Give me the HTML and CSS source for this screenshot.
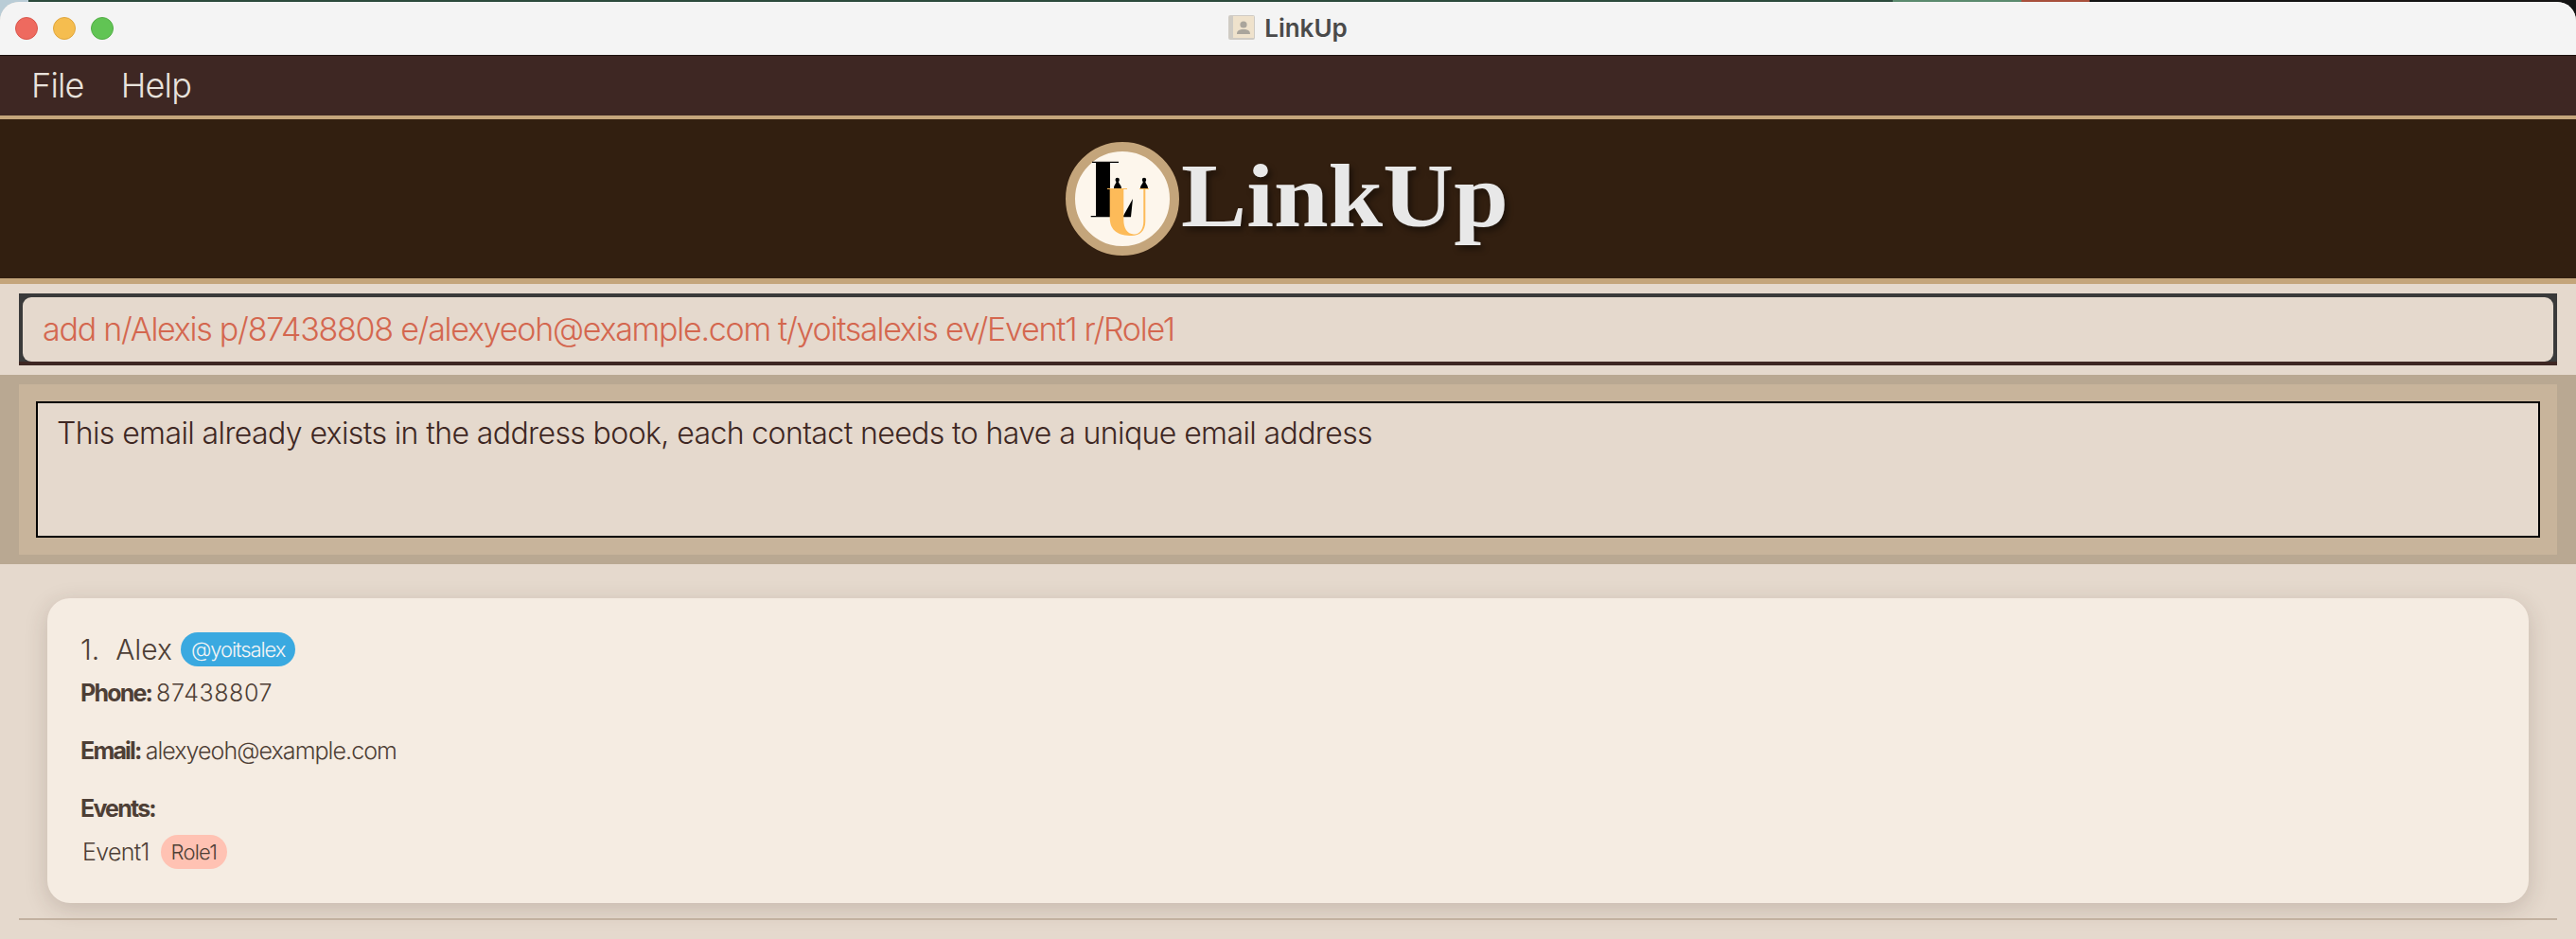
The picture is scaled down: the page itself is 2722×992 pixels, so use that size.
FILE: index.html
```html
<!DOCTYPE html>
<html lang="en">
<head>
    <meta charset="UTF-8">
    <meta name="viewport" content="width=device-width, initial-scale=1.0">
    <title>LinkUp</title>
    <link rel="stylesheet" href="styles.css">
</head>
<body>
    <div class="window">
        <div class="title-bar">
            <div class="traffic-lights">
                <span class="light light-close"></span>
                <span class="light light-min"></span>
                <span class="light light-max"></span>
            </div>
            <div class="window-title">
                <svg class="book-icon" width="28" height="26" viewBox="0 0 28 26">
                    <rect x="0" y="0" width="28" height="26" rx="2" fill="#cfcbc4"/>
                    <rect x="5" y="1" width="22" height="23" fill="#efe2cc"/>
                    <circle cx="16" cy="10" r="3.6" fill="#aaa59c"/>
                    <path d="M9 20 C9 16 12 15.5 14 15 L18 15 C20 15.5 23 16 23 20 Z" fill="#aaa59c"/>
                </svg>
                <span>LinkUp</span>
            </div>
        </div>

        <nav class="menu-bar">
            <span class="menu-item">File</span>
            <span class="menu-item">Help</span>
        </nav>

        <header class="brand">
            <div class="logo">
                <svg width="100" height="100" viewBox="0 0 100 100">
                    <!-- big L -->
                    <path d="M18 10.7 H46 V12 H37 V68 H51 L61 50 L59 69.3 H16.7 V68 H22 V12 H18 Z" fill="#000"/>
                    <!-- two small people on the U -->
                    <circle cx="44.7" cy="30" r="2.2" fill="#000"/>
                    <path d="M41 39 C41 35.5 43 35 43.5 32 H46 C46.5 35 49 35.5 49 39 Z" fill="#000"/>
                    <circle cx="73" cy="30" r="2.2" fill="#000"/>
                    <path d="M69 39 C69 35.5 71.3 35 71.8 32 H74.3 C74.8 35 77 35.5 77 39 Z" fill="#000"/>
                    <!-- U -->
                    <path d="M34 39 H55 V40 H51.3 V72 C51.3 81 55 87 62 87.5 C68 88 72.3 82 72.3 74 V40 H68 V39 H78 V40 H74.3 V74 C74.3 84 68 89 60 89 C46 89 36.7 84 36.7 70 V40 H34 Z" fill="#fdbb59"/>
                </svg>
            </div>
            <h1 class="brand-name">LinkUp</h1>
        </header>

        <div class="command-box">
            <div class="command-frame">
                <div class="command-input">add n/Alexis p/87438808 e/alexyeoh@example.com t/yoitsalexis ev/Event1 r/Role1</div>
            </div>
        </div>

        <div class="result-outer">
            <div class="result-inner">
                <div class="result-text">This email already exists in the address book, each contact needs to have a unique email address</div>
            </div>
        </div>

        <div class="person-list">
            <div class="person-card">
                <div class="person-name">
                    <span>1.&nbsp; Alex</span>
                    <span class="tag-telegram">@yoitsalex</span>
                </div>
                <div class="person-row row-phone"><b>Phone:</b><span class="digits">87438807</span></div>
                <div class="person-row row-email"><b>Email:</b><span class="email">alexyeoh@example.com</span></div>
                <div class="person-row row-events"><b>Events:</b></div>
                <div class="event-row">
                    <span class="event-name">Event1</span>
                    <span class="tag-role">Role1</span>
                </div>
            </div>
            <div class="list-divider"></div>
        </div>
    </div>
</body>
</html>
```

FILE: styles.css
```css
* {
    box-sizing: border-box;
}

html, body {
    margin: 0;
    padding: 0;
    height: 100%;
}

body {
    background: linear-gradient(to right, #b9ccd6 0, #b9ccd6 30px, #2c4a3c 30px, #2c4a3c 2000px, #5b8a6e 2000px, #5b8a6e 2136px, #a8503c 2136px, #a8503c 2208px, #141414 2208px);
    font-family: Inter, "Noto Sans", sans-serif;
    color: #3e2723;
    overflow: hidden;
}

.window {
    margin-top: 2px;
    height: 990px;
    background-color: #e5d9cd;
    border-radius: 20px 20px 0 0;
    overflow: hidden;
}

.title-bar {
    height: 56px;
    padding-bottom: 2px;
    background-color: #f4f4f4;
    position: relative;
    display: flex;
    align-items: center;
    justify-content: center;
}

.traffic-lights {
    position: absolute;
    left: 16px;
    top: 16px;
    display: flex;
    gap: 16px;
}

.light {
    width: 24px;
    height: 24px;
    border-radius: 50%;
}

.light-close {
    background-color: #ee6a5f;
    border: 1px solid #d9574d;
}

.light-min {
    background-color: #f5bd4f;
    border: 1px solid #dfa53c;
}

.light-max {
    background-color: #61c454;
    border: 1px solid #52ad46;
}

.window-title {
    display: flex;
    align-items: center;
    gap: 10px;
    font-size: 26px;
    font-weight: 600;
    color: #4a4a4a;
}

.book-icon {
    display: block;
}

.menu-bar {
    height: 68px;
    padding-bottom: 2px;
    background-color: #3e2723;
    border-top: 1px solid #1c100c;
    border-bottom: 4px solid #c4a57b;
    display: flex;
    align-items: center;
    gap: 39px;
    padding-left: 33px;
    color: #e8e2dc;
    font-size: 36px;
    font-weight: 300;
    letter-spacing: -0.8px;
}

.brand {
    height: 174px;
    background-color: #321f10;
    border-bottom: 6px solid #c4a57b;
    display: flex;
    align-items: center;
    justify-content: center;
    gap: 2px;
}

.logo {
    width: 120px;
    height: 120px;
    border: 10px solid #c4a57b;
    border-radius: 50%;
    background-color: #fdf6ec;
}

.logo svg {
    display: block;
}

.brand-name {
    margin: 0 4px 6px 0;
    width: 344px;
    font-family: "Liberation Serif", serif;
    font-size: 96px;
    line-height: 110px;
    font-weight: 700;
    color: #e8e8e8;
    text-shadow: 3px 4px 6px rgba(0, 0, 0, 0.45);
    transform: scaleX(1.08);
    transform-origin: left center;
}

.command-box {
    padding: 10px 20px;
}

.command-frame {
    height: 76px;
    background-color: #3a3a3a;
    border-bottom: 4px solid #3e2723;
    padding: 4px 4px 0;
}

.command-input {
    height: 68px;
    padding-bottom: 2px;
    background-color: #e5d9cd;
    border-radius: 9px;
    padding-left: 21px;
    display: flex;
    align-items: center;
    color: #d4674f;
    font-size: 34px;
    font-weight: 300;
    letter-spacing: -1.25px;
}

.result-outer {
    height: 200px;
    background-color: #b9a892;
    padding: 10px 20px;
}

.result-inner {
    height: 180px;
    background-color: #c8b49b;
    padding: 18px;
}

.result-text {
    height: 144px;
    background-color: #e5d9cd;
    border: 2px solid #000;
    padding: 12px 20px;
    font-size: 32px;
    font-weight: 300;
    letter-spacing: -0.6px;
    color: #3e2723;
}

.person-list {
    padding: 36px 20px 0;
}

.person-card {
    height: 322px;
    margin: 0 30px;
    background-color: #f5ece2;
    border-radius: 24px;
    box-shadow: 0 6px 24px rgba(62, 39, 35, 0.18);
    padding: 36px 35px;
    color: #4e3f36;
}

.person-name {
    display: flex;
    align-items: center;
    gap: 9px;
    font-size: 30px;
    font-weight: 300;
    height: 36px;
}

.tag-telegram {
    background-color: #3aa9e0;
    color: #f5f5f5;
    font-size: 22px;
    font-weight: 300;
    letter-spacing: -1.1px;
    height: 36px;
    line-height: 36px;
    padding: 0 11px;
    border-radius: 18px;
}

.person-row {
    font-size: 25px;
    font-weight: 300;
    height: 30px;
    line-height: 30px;
}

.person-row b {
    font-weight: 700;
    letter-spacing: -1.8px;
    margin-right: 5px;
}

.digits {
    letter-spacing: 0.6px;
}

.email {
    letter-spacing: -0.95px;
}

.row-phone {
    margin-top: 13px;
}

.row-email,
.row-events {
    margin-top: 31px;
}

.event-row {
    display: flex;
    align-items: center;
    gap: 12px;
    margin-top: 13px;
    padding-left: 2px;
    font-size: 25px;
    font-weight: 300;
}

.event-name {
    letter-spacing: -0.7px;
}

.tag-role {
    background-color: #ffc2b3;
    font-size: 22px;
    font-weight: 300;
    letter-spacing: -0.8px;
    height: 36px;
    line-height: 36px;
    padding: 0 11px;
    border-radius: 18px;
}

.list-divider {
    height: 2px;
    margin-top: 16px;
    background-color: #c2b1a0;
}
```
